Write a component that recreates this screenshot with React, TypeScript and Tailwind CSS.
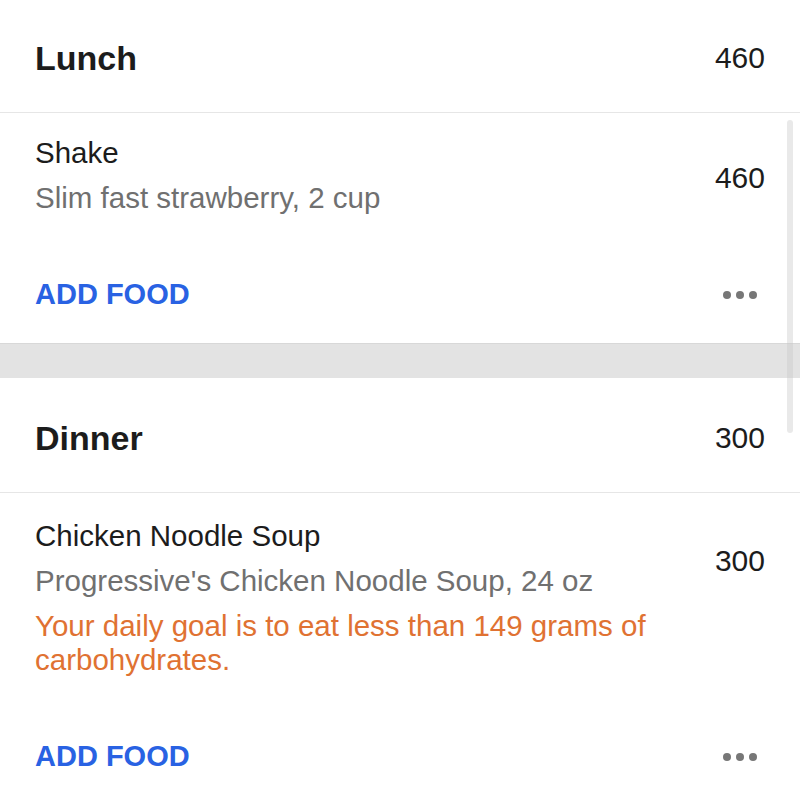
import React from "react";

const font = { fontFamily: '"Liberation Sans", Arial, sans-serif' };

function Dots() {
  return (
    <div className="flex items-center gap-[5px] mr-[8px]">
      <span className="block w-[8px] h-[8px] rounded-full bg-[#777777]" />
      <span className="block w-[8px] h-[8px] rounded-full bg-[#777777]" />
      <span className="block w-[8px] h-[8px] rounded-full bg-[#777777]" />
    </div>
  );
}

function Header({ title, total }: { title: string; total: string }) {
  return (
    <div className="h-[115px] pt-[5px] flex items-center justify-between px-[35px] border-b border-[#e6e6e6]">
      <span className="text-[34px] leading-none font-bold text-[#1c1c1c]">{title}</span>
      <span className="text-[30px] leading-none text-[#1c1c1c]">{total}</span>
    </div>
  );
}

function Item({
  name,
  desc,
  warn,
  cal,
  pt,
}: {
  name: string;
  desc: string;
  warn?: string;
  cal: string;
  pt: string;
}) {
  return (
    <div className={`flex justify-between px-[35px] pb-[31px] ${pt}`}>
      <div className="w-[640px] flex flex-col gap-[11px]">
        <div className="text-[29.5px] leading-[34px] text-[#1c1c1c]">{name}</div>
        <div className="text-[29.5px] leading-[34px] text-[#707070]">{desc}</div>
        {warn && <div className="text-[29.5px] leading-[34px] text-[#e07232]">{warn}</div>}
      </div>
      <div className="mt-[25px] text-[30px] leading-[34px] text-[#1c1c1c]">{cal}</div>
    </div>
  );
}

function AddRow() {
  return (
    <div className="h-[97px] flex items-center justify-between px-[35px]">
      <span className="text-[29px] leading-none font-bold text-[#2962e3]">ADD FOOD</span>
      <Dots />
    </div>
  );
}

export default function App() {
  return (
    <div className="relative w-[800px] h-[794px] overflow-hidden bg-white" style={font}>
      <div className="-mt-[2px]">
        <Header title="Lunch" total="460" />
        <Item
          name="Shake"
          desc="Slim fast strawberry, 2 cup"
          cal="460"
          pt="pt-[23px]"
        />
        <AddRow />
        <div className="h-[35px] bg-[#e3e3e3] border-t border-[#d8d8d8]" />
        <Header title="Dinner" total="300" />
        <Item
          name="Chicken Noodle Soup"
          desc="Progressive's Chicken Noodle Soup, 24 oz"
          warn="Your daily goal is to eat less than 149 grams of carbohydrates."
          cal="300"
          pt="pt-[26px]"
        />
        <AddRow />
      </div>
      <div className="absolute left-[787px] top-[120px] w-[6px] h-[313px] rounded-full bg-[#c8c8c8]/40" />
    </div>
  );
}
